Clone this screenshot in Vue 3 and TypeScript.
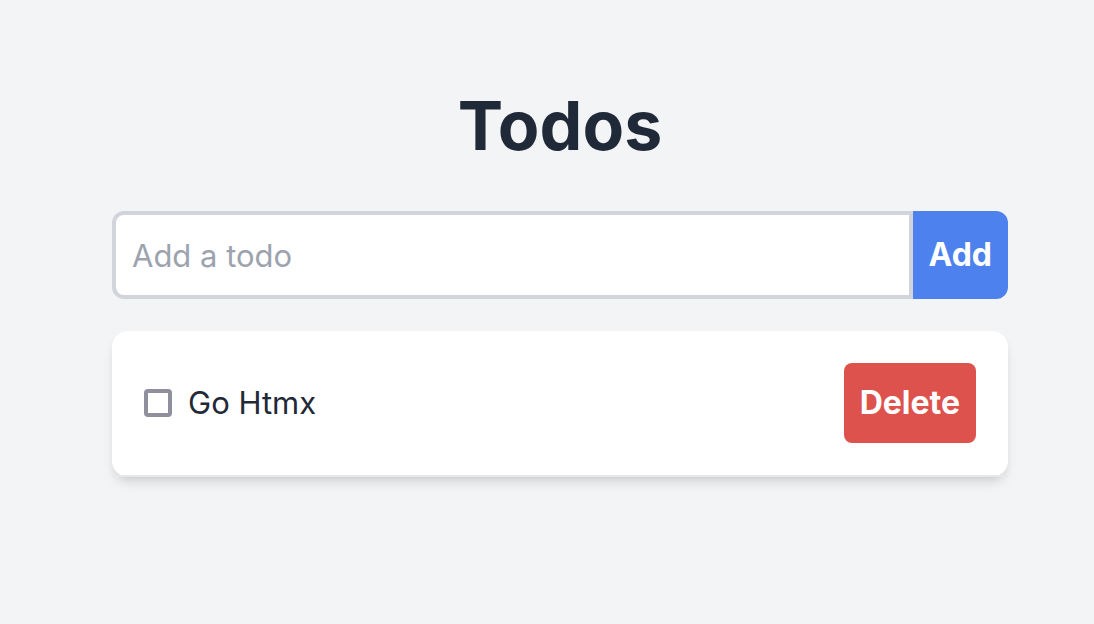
<script setup lang="ts">
import { ref } from 'vue'

interface Todo {
  id: number
  title: string
  done: boolean
}

const draft = ref('')
const todos = ref<Todo[]>([{ id: 1, title: 'Go Htmx', done: false }])

function addTodo(): void {
  const title = draft.value.trim()
  if (!title) return
  todos.value.push({ id: Date.now(), title, done: false })
  draft.value = ''
}

function removeTodo(id: number): void {
  todos.value = todos.value.filter((todo) => todo.id !== id)
}
</script>

<template>
  <main class="page">
    <h1 class="title">Todos</h1>
    <form class="add-form" @submit.prevent="addTodo">
      <input v-model="draft" class="field" type="text" placeholder="Add a todo" aria-label="Add a todo" />
      <button class="add" type="submit">Add</button>
    </form>
    <ul class="list">
      <li v-for="todo in todos" :key="todo.id" class="item">
        <label class="todo">
          <input v-model="todo.done" class="check" type="checkbox" />
          <span>{{ todo.title }}</span>
        </label>
        <button class="delete" type="button" @click="removeTodo(todo.id)">Delete</button>
      </li>
    </ul>
  </main>
</template>

<style>
body {
  margin: 0;
  background: #f3f4f6;
}
</style>

<style scoped>
.page {
  box-sizing: border-box;
  padding: 80px 86px 80px 112px;
  color: #1f2937;
  font-family: Inter, "Liberation Sans", sans-serif;
  font-size: 31px;
  line-height: 48px;
}

.title {
  margin: 0 0 41px;
  font-size: 68px;
  line-height: 90px;
  font-weight: 700;
  text-align: center;
}

.add-form {
  display: flex;
  margin-bottom: 32px;
}

.field {
  box-sizing: border-box;
  flex: 1;
  min-width: 0;
  height: 88px;
  padding: 16px;
  border: 4px solid #d1d5db;
  border-radius: 12px 0 0 12px;
  background: #fff;
  color: inherit;
  font: inherit;
  outline: none;
}

.field::placeholder {
  color: #9ca3af;
  opacity: 1;
}

.add,
.delete {
  border: 0;
  padding: 16px;
  color: #fff;
  font: inherit;
  font-size: 32px;
  font-weight: 700;
}

.add {
  border-radius: 0 12px 12px 0;
  background: #4d81ee;
}

.list {
  margin: 0;
  padding: 0;
  border-radius: 16px;
  background: #fff;
  box-shadow: 0 8px 12px -2px rgba(0, 0, 0, 0.1), 0 4px 8px -4px rgba(0, 0, 0, 0.1);
  list-style: none;
}

.item {
  display: flex;
  align-items: center;
  justify-content: space-between;
  padding: 32px;
  border-bottom: 2px solid #e5e7eb;
}

.todo {
  display: flex;
  align-items: center;
  gap: 16px;
}

.check {
  box-sizing: border-box;
  appearance: none;
  width: 28px;
  height: 28px;
  margin: 0;
  border: 4px solid #8f8f9d;
  border-radius: 4px;
  background: #fff;
}

.check:checked {
  background: #4d81ee;
}

.delete {
  border-radius: 8px;
  background: #dd524c;
}
</style>
